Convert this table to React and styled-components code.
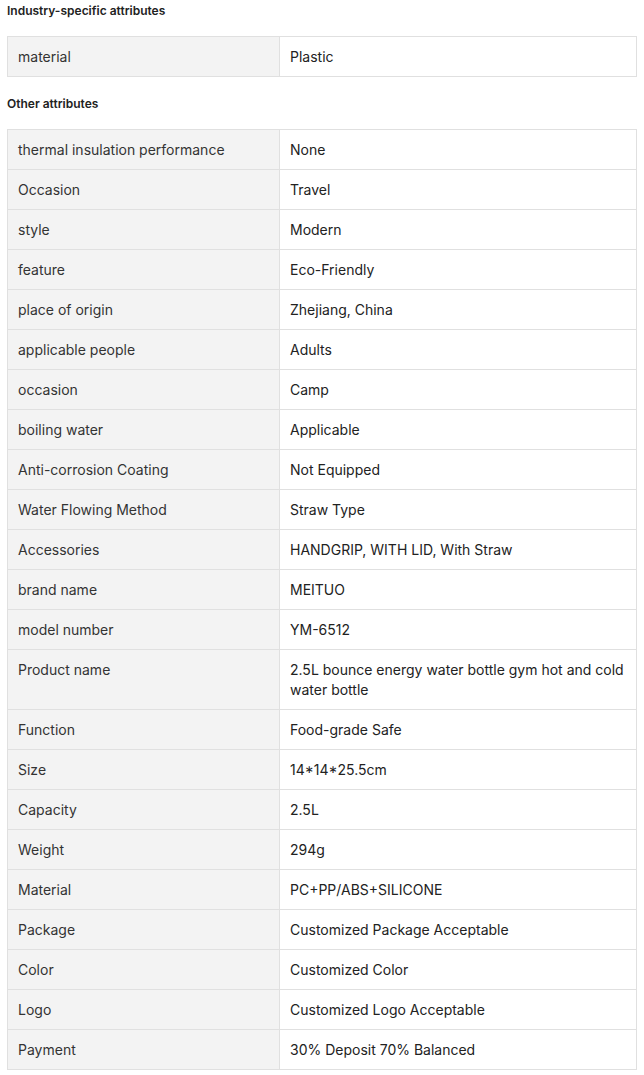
import React from 'react'
import styled, { createGlobalStyle } from 'styled-components'

const GlobalStyle = createGlobalStyle`
  body {
    margin: 0;
    background: #fff;
    font-family: Inter, "Liberation Sans", Arial, sans-serif;
    color: #333;
  }
`

const Page = styled.div`
  padding: 3px 7px 0 7px;
`

const Heading = styled.div`
  font-size: 12px;
  font-weight: 600;
  line-height: 16px;
  color: #222;
  margin-bottom: 17px;
`

const Table = styled.table`
  width: 630px;
  border-collapse: collapse;
  margin-bottom: 19px;
  font-size: 14px;
  line-height: 20px;
  table-layout: fixed;
`

const Label = styled.td`
  width: 251px;
  background: #f3f3f3;
  border: 1px solid #e0e0e0;
  padding: 10px 10px 9px;
  color: #333;
  vertical-align: top;
`

const Value = styled.td`
  border: 1px solid #e0e0e0;
  padding: 10px 10px 9px;
  color: #222;
  vertical-align: top;
`

const industry = [['material', 'Plastic']]

const other = [
  ['thermal insulation performance', 'None'],
  ['Occasion', 'Travel'],
  ['style', 'Modern'],
  ['feature', 'Eco-Friendly'],
  ['place of origin', 'Zhejiang, China'],
  ['applicable people', 'Adults'],
  ['occasion', 'Camp'],
  ['boiling water', 'Applicable'],
  ['Anti-corrosion Coating', 'Not Equipped'],
  ['Water Flowing Method', 'Straw Type'],
  ['Accessories', 'HANDGRIP, WITH LID, With Straw'],
  ['brand name', 'MEITUO'],
  ['model number', 'YM-6512'],
  ['Product name', '2.5L bounce energy water bottle gym hot and cold water bottle'],
  ['Function', 'Food-grade Safe'],
  ['Size', '14*14*25.5cm'],
  ['Capacity', '2.5L'],
  ['Weight', '294g'],
  ['Material', 'PC+PP/ABS+SILICONE'],
  ['Package', 'Customized Package Acceptable'],
  ['Color', 'Customized Color'],
  ['Logo', 'Customized Logo Acceptable'],
  ['Payment', '30% Deposit 70% Balanced'],
]

const AttrTable = ({ rows }) => (
  <Table>
    <tbody>
      {rows.map(([k, v], i) => (
        <tr key={i}>
          <Label>{k}</Label>
          <Value>{v}</Value>
        </tr>
      ))}
    </tbody>
  </Table>
)

const App = () => {
  return (
    <Page>
      <GlobalStyle />
      <Heading>Industry-specific attributes</Heading>
      <AttrTable rows={industry} />
      <Heading>Other attributes</Heading>
      <AttrTable rows={other} />
    </Page>
  )
}

export default App
